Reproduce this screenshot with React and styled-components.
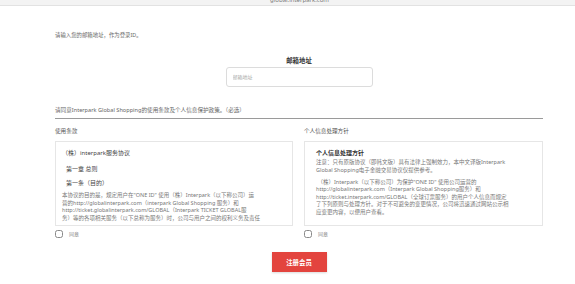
import styled, { createGlobalStyle } from "styled-components";

const GlobalStyle = createGlobalStyle`
  html, body {
    margin: 0;
    padding: 0;
    background: #fff;
  }
  body {
    font-family: "Noto Sans", "Noto Sans CJK SC", sans-serif;
    color: #555;
  }
`;

const Page = styled.div`
  width: 575px;
  height: 284px;
  overflow: hidden;
`;

const TopBar = styled.div`
  height: 5px;
  background: #f3f3f3;
  border-bottom: 1px solid #e2e2e2;
  overflow: hidden;
  display: flex;
  justify-content: center;
  padding-left: 24px;
`;

const Url = styled.span`
  font-size: 6px;
  line-height: 6px;
  margin-top: -3px;
  color: #777;
`;

const Wrapper = styled.div`
  width: 488px;
  margin-left: 55px;
  display: flex;
  flex-direction: column;
`;

const Intro = styled.p`
  margin: 25px 0 0;
  font-size: 5.4px;
  line-height: 8px;
  color: #666;
`;

const FieldTitle = styled.h3`
  margin: 18px 0 0;
  text-align: center;
  font-size: 6.4px;
  line-height: 8px;
  font-weight: 700;
  color: #333;
`;

const Input = styled.input`
  align-self: center;
  width: 147px;
  height: 20px;
  box-sizing: border-box;
  margin: 2px 0 0 0;
  padding: 0 6px;
  border: 1px solid #dcdcdc;
  border-radius: 3px;
  font-family: inherit;
  font-size: 5px;
  color: #555;
  outline: none;
  &::placeholder {
    color: #aaa;
  }
`;

const Notice = styled.div`
  margin-top: 19px;
  padding-bottom: 4px;
  font-size: 5.6px;
  line-height: 8px;
  color: #666;
  border-bottom: 1px solid #9a9a9a;
`;

const Columns = styled.div`
  display: grid;
  grid-template-columns: 238px 239px;
  column-gap: 11px;
  margin-top: 8px;
`;

const Column = styled.div`
  display: flex;
  flex-direction: column;
`;

const Label = styled.div`
  font-size: 5.6px;
  line-height: 8px;
  color: #555;
`;

const TermsBox = styled.div`
  margin-top: 6px;
  height: 85px;
  box-sizing: border-box;
  border: 1px solid #e6e6e6;
  padding: ${(p) => (p.$wide ? "7px 12px 0 11px" : "7px 10px 0 6px")};
  overflow: hidden;
`;

const BoxHeading = styled.div`
  font-size: 6px;
  line-height: 8px;
  color: ${(p) => (p.$strong ? "#333" : "#444")};
  font-weight: ${(p) => (p.$strong ? 700 : 400)};
  margin-bottom: ${(p) => p.$gap || 0}px;
  padding-left: ${(p) => p.$indent || 0}px;
`;

const Paragraph = styled.p`
  margin: 0 0 ${(p) => p.$gap || 0}px;
  font-size: 5.5px;
  line-height: 7.5px;
  color: #777;
  white-space: nowrap;
`;

const Agree = styled.label`
  display: flex;
  align-items: center;
  gap: 6px;
  margin-top: 4px;
  font-size: 5px;
  line-height: 8px;
  color: #888;
`;

const Check = styled.span`
  width: 8px;
  height: 8px;
  box-sizing: border-box;
  border: 1px solid #8a8a8a;
  border-radius: 2.5px;
`;

const SubmitButton = styled.button`
  align-self: center;
  margin-top: 14px;
  width: 55px;
  height: 20px;
  border: none;
  background: #e3443e;
  color: #fff;
  font-family: inherit;
  font-size: 6.4px;
  font-weight: 700;
  box-shadow: 0 1px 2px rgba(0, 0, 0, 0.15);
`;

const App = () => {
  return (
    <Page>
      <GlobalStyle />
      <TopBar>
        <Url>global.interpark.com</Url>
      </TopBar>
      <Wrapper>
        <Intro>请输入您的邮箱地址，作为登录ID。</Intro>
        <FieldTitle>邮箱地址</FieldTitle>
        <Input placeholder="邮箱地址" />
        <Notice>
          请同意Interpark Global Shopping的使用条款及个人信息保护政策。（必选）
        </Notice>
        <Columns>
          <Column>
            <Label>使用条款</Label>
            <TermsBox>
              <BoxHeading $gap={8}>（株）interpark服务协议</BoxHeading>
              <BoxHeading $gap={6} $indent={4}>第一章 总则</BoxHeading>
              <BoxHeading $gap={5} $indent={4}>第一条（目的）</BoxHeading>
              <Paragraph>
                本协议的目的是，规定用户在"ONE ID" 使用（株）Interpark（以下称公司）运
                <br />
                营的http://globalinterpark.com（interpark Global Shopping 服务）和
                <br />
                http://ticket.globalinterpark.com/GLOBAL（Interpark TICKET GLOBAL服
                <br />
                务）等的各项相关服务（以下总称为服务）时，公司与用户之间的权利义务及责任
              </Paragraph>
            </TermsBox>
            <Agree>
              <Check />
              同意
            </Agree>
          </Column>
          <Column>
            <Label>个人信息处理方针</Label>
            <TermsBox $wide>
              <BoxHeading $strong $gap={2}>个人信息处理方针</BoxHeading>
              <Paragraph $gap={4.5}>
                注意：只有原版协议（即韩文版）具有法律上强制效力，本中文译版Interpark
                <br />
                Global Shopping电子金融交易协议仅提供参考。
              </Paragraph>
              <Paragraph>
                &nbsp;（株）Interpark（以下称公司）为保护"ONE ID" 使用公司运营的
                <br />
                http://globalinterpark.com（Interpark Global Shopping服务）和
                <br />
                http://ticket.interpark.com/GLOBAL（全球订票服务）的用户个人信息而规定
                <br />
                了下列原则与处理方针。对于不可避免的变更情况，公司将迅速通过网站公示相
                <br />
                应变更内容，以便用户查看。
              </Paragraph>
            </TermsBox>
            <Agree>
              <Check />
              同意
            </Agree>
          </Column>
        </Columns>
        <SubmitButton>注册会员</SubmitButton>
      </Wrapper>
    </Page>
  );
};

export default App;
